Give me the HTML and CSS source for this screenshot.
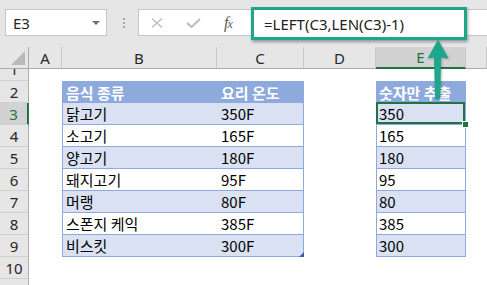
FILE: index.html
```html
<!DOCTYPE html>
<html>
<head>
<meta charset="utf-8">
<link rel="stylesheet" href="styles.css">
</head>
<body>
<div class="toolbar">
  <div class="namebox"><span>E3</span><span class="caret"></span></div>
  <div class="dots"><i></i><i></i><i></i></div>
  <div class="fxbar">
    <div class="fxbtns">
      <svg class="ic-x" width="12" height="10" viewBox="0 0 12 10"><path d="M1 0.5 L11 9.5 M11 0.5 L1 9.5" stroke="#bcbcbc" stroke-width="1.4" fill="none"/></svg>
      <svg class="ic-ok" width="15" height="10" viewBox="0 0 15 10"><path d="M1 5 L5.5 9 L14 1" stroke="#bcbcbc" stroke-width="2" fill="none"/></svg>
      <span class="fx">f<small>x</small></span>
    </div>
    <div class="formula">=LEFT(C3,LEN(C3)-1)</div>
  </div>
</div>

<div class="sheet">
  <div class="row hdr">
    <div class="ch corner"><span class="tri"></span></div>
    <div class="ch">A</div>
    <div class="ch">B</div>
    <div class="ch">C</div>
    <div class="ch">D</div>
    <div class="ch sel">E</div>
    <div class="ch"></div>
  </div>
  <div class="row r1">
    <div class="rh"><span>1</span></div>
    <div class="c"></div><div class="c"></div><div class="c"></div><div class="c"></div><div class="c"></div><div class="c"></div>
  </div>
  <div class="row">
    <div class="rh">2</div>
    <div class="c"></div>
    <div class="c th tl">음식 종류</div>
    <div class="c th tr">요리 온도</div>
    <div class="c"></div>
    <div class="c th tl tr">숫자만 추출</div>
    <div class="c"></div>
  </div>
  <div class="row">
    <div class="rh sel">3</div>
    <div class="c"></div>
    <div class="c band tb tl">닭고기</div>
    <div class="c band tb tr">350F</div>
    <div class="c"></div>
    <div class="c band tb tl tr cur">350</div>
    <div class="c"></div>
  </div>
  <div class="row">
    <div class="rh">4</div>
    <div class="c"></div>
    <div class="c tb tl">소고기</div>
    <div class="c tb tr">165F</div>
    <div class="c"></div>
    <div class="c tb tl tr">165</div>
    <div class="c"></div>
  </div>
  <div class="row">
    <div class="rh">5</div>
    <div class="c"></div>
    <div class="c band tb tl">양고기</div>
    <div class="c band tb tr">180F</div>
    <div class="c"></div>
    <div class="c band tb tl tr">180</div>
    <div class="c"></div>
  </div>
  <div class="row">
    <div class="rh">6</div>
    <div class="c"></div>
    <div class="c tb tl">돼지고기</div>
    <div class="c tb tr">95F</div>
    <div class="c"></div>
    <div class="c tb tl tr">95</div>
    <div class="c"></div>
  </div>
  <div class="row">
    <div class="rh">7</div>
    <div class="c"></div>
    <div class="c band tb tl">머랭</div>
    <div class="c band tb tr">80F</div>
    <div class="c"></div>
    <div class="c band tb tl tr">80</div>
    <div class="c"></div>
  </div>
  <div class="row">
    <div class="rh">8</div>
    <div class="c"></div>
    <div class="c tb tl">스폰지 케익</div>
    <div class="c tb tr">385F</div>
    <div class="c"></div>
    <div class="c tb tl tr">385</div>
    <div class="c"></div>
  </div>
  <div class="row">
    <div class="rh">9</div>
    <div class="c"></div>
    <div class="c band tb tl">비스킷</div>
    <div class="c band tb tr last">300F</div>
    <div class="c"></div>
    <div class="c band tb tl tr">300</div>
    <div class="c"></div>
  </div>
  <div class="row">
    <div class="rh">10</div>
    <div class="c"></div><div class="c"></div><div class="c"></div><div class="c"></div><div class="c"></div><div class="c"></div>
  </div>
  <div class="row">
    <div class="rh">11</div>
    <div class="c"></div><div class="c"></div><div class="c"></div><div class="c"></div><div class="c"></div><div class="c"></div>
  </div>
</div>

<svg class="arrow" width="26" height="66" viewBox="0 0 26 66">
  <polygon points="13,2.5 23.5,21.5 16,20.5 15.3,62 10,62 9,20.5 2.5,21.5" fill="#1ca68a"/>
</svg>
</body>
</html>
```

FILE: styles.css
```css
html, body {
  margin: 0;
  padding: 0;
}
body {
  width: 487px;
  height: 285px;
  overflow: hidden;
  background: #ffffff;
  font-family: "Noto Sans", "Open Sans", sans-serif;
  position: relative;
}

/* ---------- toolbar ---------- */
.toolbar {
  display: flex;
  align-items: flex-start;
  height: 47px;
  box-sizing: border-box;
  padding-left: 5px;
  background: #e6e6e6;
}
.namebox {
  margin-top: 9px;
  width: 102px;
  height: 27px;
  box-sizing: border-box;
  border: 1px solid #c6c6c6;
  background: #fff;
  display: flex;
  align-items: center;
  justify-content: space-between;
  padding: 0 6px 0 7px;
  font-size: 15px;
  color: #262626;
}
.caret {
  width: 0;
  height: 0;
  border-left: 4px solid transparent;
  border-right: 4px solid transparent;
  border-top: 4px solid #6e6e6e;
}
.dots {
  margin: 18px 0 0 16px;
  display: flex;
  flex-direction: column;
  gap: 2px;
}
.dots i {
  display: block;
  width: 2px;
  height: 2px;
  background: #a8a8a8;
}
.fxbar {
  margin: 9px 0 0 13px;
  flex: 1;
  height: 27px;
  box-sizing: border-box;
  border: 1px solid #c6c6c6;
  border-right: none;
  background: #fff;
  display: flex;
  align-items: center;
}
.fxbtns {
  width: 112px;
  flex: none;
  display: flex;
  align-items: center;
}
.ic-x { margin-left: 12px; }
.ic-ok { margin-left: 23px; }
.fx {
  margin-left: 23px;
  font-family: "Liberation Serif", serif;
  font-style: italic;
  font-size: 16px;
  color: #5a5a5a;
  letter-spacing: -1px;
}
.fx small {
  font-size: 12px;
}
.formula {
  flex: none;
  width: 216px;
  height: 33px;
  margin-top: 2px;
  box-sizing: border-box;
  border: 3px solid #1ca68a;
  background: #fff;
  box-shadow: 1px 2px 3px rgba(0, 0, 0, 0.35);
  padding-left: 10px;
  display: flex;
  align-items: center;
  font-size: 15px;
  color: #222;
}

/* ---------- sheet ---------- */
.row {
  display: grid;
  grid-template-columns: 29px 33px 155px 87px 72px 90px 1fr;
  height: 22px;
}
.row.r1 {
  height: 12px;
}
.ch {
  box-sizing: border-box;
  background: #e6e6e6;
  border-right: 1px solid #c8c8c8;
  border-bottom: 1px solid #ababab;
  display: flex;
  align-items: center;
  justify-content: center;
  font-size: 15px;
  color: #262626;
}
.ch.corner {
  position: relative;
  border-right-color: #ababab;
}
.tri {
  position: absolute;
  right: 3px;
  bottom: 3px;
  width: 0;
  height: 0;
  border-left: 14px solid transparent;
  border-bottom: 14px solid #b9b9b9;
}
.ch.sel {
  background: #d2d2d2;
  color: #217346;
  border-bottom: 2px solid #217346;
}
.rh {
  box-sizing: border-box;
  background: #e6e6e6;
  border-right: 1px solid #ababab;
  border-bottom: 1px solid #d0d0d0;
  display: flex;
  align-items: center;
  justify-content: center;
  font-size: 15px;
  color: #262626;
  overflow: hidden;
}
.r1 .rh {
  align-items: flex-end;
}
.r1 .rh span {
  line-height: 22px;
}
.rh.sel {
  background: #d2d2d2;
  color: #217346;
  border-right: 2px solid #217346;
}
.c {
  box-sizing: border-box;
  display: flex;
  align-items: center;
  padding-left: 4px;
  font-family: "Noto Sans CJK KR", "Noto Sans", sans-serif;
  font-size: 15px;
  color: #000;
  white-space: nowrap;
  overflow: hidden;
}
.th {
  background: #8ea9db;
  color: #fff;
  font-weight: bold;
}
.band {
  background: #d9e1f2;
}
.tb {
  border-bottom: 1px solid #8ea9db;
}
.tl {
  border-left: 1px solid #8ea9db;
  padding-left: 3px;
}
.tr {
  border-right: 1px solid #8ea9db;
}
.tl.tr {
  padding-left: 2px;
}
.last {
  position: relative;
  overflow: visible;
}
.last::after {
  content: "";
  position: absolute;
  right: -1px;
  bottom: -1px;
  width: 0;
  height: 0;
  border-left: 5px solid transparent;
  border-bottom: 5px solid #3d5bb0;
}
.cur {
  position: relative;
  overflow: visible;
}
.cur::after {
  content: "";
  position: absolute;
  top: -1px;
  left: -1px;
  right: 0;
  bottom: 0;
  border: 2px solid #217346;
  z-index: 2;
}
.cur::before {
  content: "";
  position: absolute;
  right: -3px;
  bottom: -3px;
  width: 5px;
  height: 5px;
  background: #217346;
  outline: 1px solid #fff;
  z-index: 3;
}

.arrow {
  position: absolute;
  left: 425px;
  top: 37px;
  z-index: 10;
  filter: drop-shadow(1px 1px 1px rgba(0, 0, 0, 0.25));
}
```
